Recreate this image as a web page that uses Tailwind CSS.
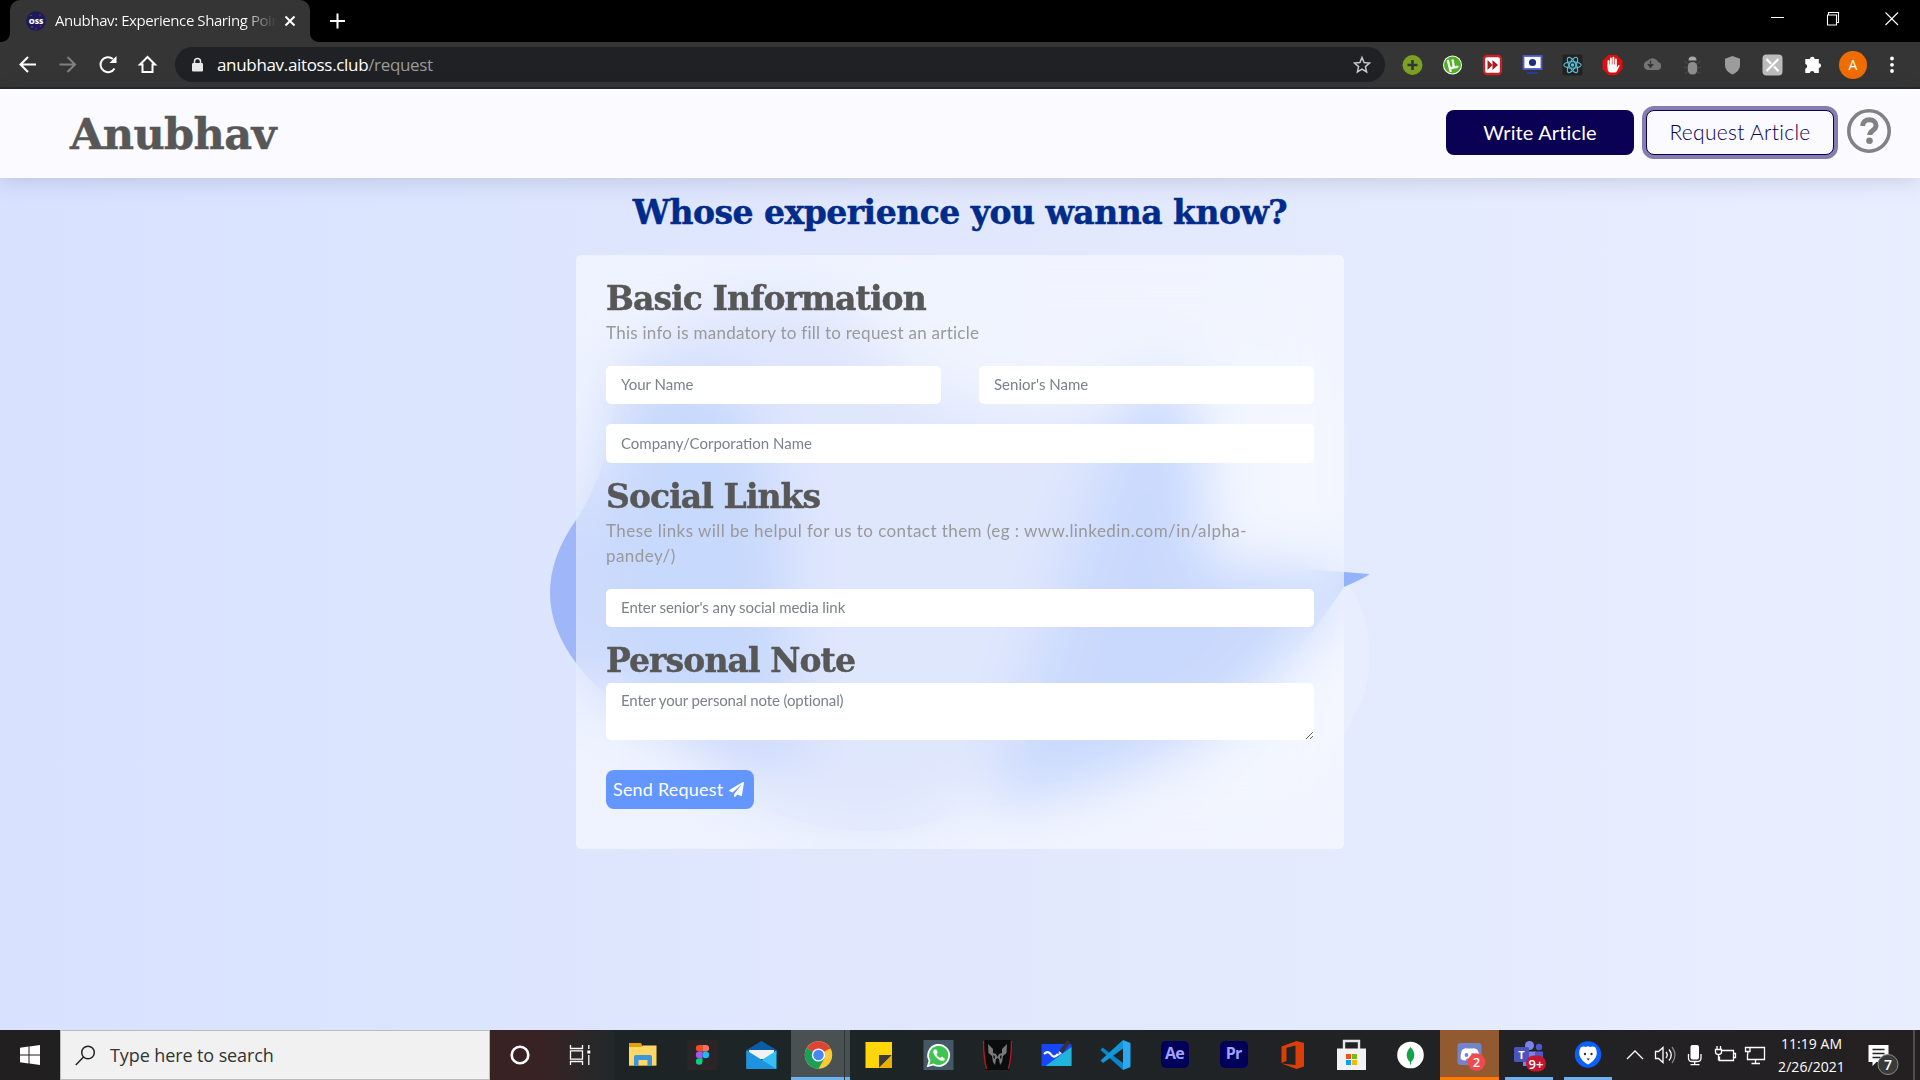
<!DOCTYPE html>
<html lang="en">
<head>
<meta charset="utf-8">
<title>Anubhav: Experience Sharing Point</title>
<script src="https://cdn.jsdelivr.net/npm/@tailwindcss/browser@4"></script>
</head>
<body class="flex h-[1080px] w-[1920px] flex-col overflow-hidden bg-black font-['Open_Sans',sans-serif]">

<!-- Tab strip -->
<div class="flex h-[42px] shrink-0 items-stretch justify-between bg-black">
  <div class="flex">
    <svg class="h-[42px] w-[10px]" viewBox="0 0 10 42"><path d="M10 33v9H1c5 0 9-4 9-9z" fill="#353535"/></svg>
    <div class="flex w-[300px] items-center rounded-t-[10px] bg-[#353535] pl-4">
      <svg class="size-5 shrink-0" viewBox="0 0 20 20"><circle cx="10" cy="10" r="9.8" fill="#1b1b5c"/><g fill="#a02a78"><circle cx="5" cy="4.500" r=".8"/><circle cx="14" cy="4" r=".8"/><circle cx="6" cy="16" r=".9"/><circle cx="14.500" cy="15" r=".8"/><circle cx="10" cy="17.500" r=".7"/></g><text x="10" y="12.800" text-anchor="middle" font-family="Open Sans" font-weight="800" font-size="7.500" fill="#fff">OSS</text></svg>
      <span class="ml-[9px] w-[222px] overflow-hidden pb-px whitespace-nowrap bg-linear-to-r from-white from-85% to-[#353535] bg-clip-text text-[15px] tracking-[-0.42px] text-transparent">Anubhav: Experience Sharing Poin</span>
      <svg class="ml-1.5 h-[14px] w-[14px]" viewBox="0 0 14 14"><path d="M2.500 2.500l9 9m0-9l-9 9" stroke="#fff" stroke-width="2"/></svg>
    </div>
    <svg class="h-[42px] w-[10px]" viewBox="0 0 10 42"><path d="M0 33v9h9c-5 0-9-4-9-9z" fill="#353535"/></svg>
    <svg class="ml-[9px] h-[42px] w-4" viewBox="0 0 16 42"><path d="M8.500 13.500v15M1 21h15" stroke="#fff" stroke-width="2"/></svg>
  </div>
  <svg class="h-[42px] w-[175px]" viewBox="0 0 175 42" fill="none" stroke="#fff" stroke-width="1.100"><path d="M26 17.500h13M83.500 15.500v-3h10v10h-2.500M82.500 15h9v10h-9zM140.500 12.500l12.500 12.500m0-12.500l-12.500 12.500"/></svg>
</div>

<!-- Toolbar -->
<div class="flex h-[47px] shrink-0 items-center border-b-2 border-[#262626] bg-[#353535]">
  <svg class="h-[45px] w-[175px]" viewBox="0 0 175 45" fill="none" stroke="#fff" stroke-width="2">
    <path d="M36 22.500H20.500m7.500-7.500l-7.500 7.500 7.500 7.500"/>
    <path d="M59.500 22.500H75m-7.500-7.500l7.500 7.500-7.500 7.500" stroke="#808080"/>
    <path d="M114.500 26.500a7.500 7.500 0 1 1-1.600-9.500"/><path d="M116.500 14v7h-7z" fill="#fff" stroke="none"/>
    <path d="M142.500 30v-7.500h-2.500l7.500-7.500 7.500 7.500h-2.500v7.500z"/>
  </svg>
  <div class="flex h-[35px] w-[1210px] items-center justify-between rounded-full bg-[#202124] pl-[16px] pr-3">
    <div class="flex items-center">
      <svg class="h-[16px] w-[13px]" viewBox="0 0 13 16"><rect x="1" y="6" width="11" height="8.500" rx="1.200" fill="#e8e8e8"/><path d="M3.500 6V4.500a3 3 0 0 1 6 0V6" fill="none" stroke="#e8e8e8" stroke-width="1.500"/></svg>
      <p class="ml-[13px] text-[17px] leading-[24px] tracking-[-0.33px] text-white">anubhav.aitoss.club<span class="text-[#9a9a9a]">/request</span></p>
    </div>
    <svg class="size-[20px]" viewBox="0 0 20 20"><path d="M9 2.500l2.100 5 5.400.5-4.100 3.600 1.200 5.300L9 14.100l-4.600 2.800 1.200-5.300L1.500 8l5.400-.5z" fill="none" stroke="#c8c8c8" stroke-width="1.500"/></svg>
  </div>
  <div class="flex flex-1 items-center pl-[17px]">
    <svg class="h-[24px] w-[40px]" viewBox="0 0 40 24"><circle cx="10.500" cy="12" r="10" fill="#7ba023"/><path d="M10.500 7v10M5.500 12h10" stroke="#353535" stroke-width="2.600"/></svg>
    <svg class="h-[24px] w-[40px]" viewBox="0 0 40 24"><circle cx="10.500" cy="12" r="9.500" fill="#fff"/><circle cx="10.500" cy="12" r="8.500" fill="#4fb021"/><path d="M5.800 7l1.600 6.500c.6 2.400 4.600 2 4.200-.8L10.500 6.500m1.100 6.500c.7 1.800 3.200 1.600 4.400 0M7.400 13.500l1.300 5.500" fill="none" stroke="#fff" stroke-width="2.300"/></svg>
    <svg class="h-[24px] w-[40px]" viewBox="0 0 40 24"><rect x="2" y="3" width="17" height="18" rx="3" fill="#fff" stroke="#cb2026" stroke-width="2.300"/><path d="M5.500 7l5 5-5 5zM10.500 7l5.500 5-5.500 5z" fill="#a81c20"/></svg>
    <svg class="h-[24px] w-[40px]" viewBox="0 0 40 24"><rect x="1.500" y="3" width="18" height="13" fill="#fff" stroke="#4c5bd4" stroke-width="1.800"/><circle cx="10.500" cy="9.500" r="3.600" fill="#1e2f80"/><path d="M5 19h11v2H5z" fill="#2b3aa0"/></svg>
    <svg class="h-[24px] w-[40px]" viewBox="0 0 40 24"><rect x=".500" y="1.500" width="20" height="21" rx="2" fill="#222"/><g fill="none" stroke="#53c1de" stroke-width="1.100"><ellipse cx="10.500" cy="12" rx="8.700" ry="3.300"/><ellipse cx="10.500" cy="12" rx="8.700" ry="3.300" transform="rotate(60 10.500 12)"/><ellipse cx="10.500" cy="12" rx="8.700" ry="3.300" transform="rotate(120 10.500 12)"/></g><circle cx="10.500" cy="12" r="1.800" fill="#53c1de"/></svg>
    <svg class="h-[24px] w-[40px]" viewBox="0 0 40 24"><path d="M6.500 2h8l6 6v8l-6 6h-8l-6-6V8z" fill="#e40d0d"/><path d="M6.500 13.500V8M8.900 12V5.500M11.400 12V4.700M13.900 12V6.500" stroke="#fff" stroke-width="1.900" stroke-linecap="round"/><path d="M5.600 11.500h9.200v3l1.800-2.600 1.200.6-2.800 5.500c-.6 1-1.500 1.500-3 1.500H9c-2 0-3.400-1.500-3.400-4z" fill="#fff"/></svg>
    <svg class="h-[24px] w-[40px]" viewBox="0 0 40 24"><path d="M5 17.500a4.700 4.700 0 0 1-.3-9.200 6 6 0 0 1 10.500 1.200 4.200 4.200 0 0 1 .5 8z" transform="translate(.8 -.5)" fill="#747474"/><path d="M8.500 7.500v5.500M6.300 11.500l2.200 3 2.200-3z" fill="#353535" stroke="#353535" stroke-width="1.200"/></svg>
    <svg class="h-[24px] w-[40px]" viewBox="0 0 40 24"><path d="M6.500 7.500a4 4 0 0 1 8 0z" fill="#a9a9a9"/><rect x="5.800" y="9" width="9.400" height="12.500" rx="4.500" fill="#8d8d8d"/><path d="M2.500 8l3 2.500M18.500 8l-3 2.500M2 14.500h3.500M15.500 14.500H19M3 20.500l3-2M18 20.500l-3-2" stroke="#4a4a4a" stroke-width="1.200"/></svg>
    <svg class="h-[24px] w-[40px]" viewBox="0 0 40 24"><path d="M10.500 3l7.500 2.800v6c0 4.500-3 8-7.500 9.700C6 19.800 3 16.300 3 11.800v-6z" fill="#9c9c9c"/></svg>
    <svg class="h-[24px] w-[40px]" viewBox="0 0 40 24"><rect x=".500" y="1.500" width="20" height="21" rx="4" fill="#bcbcbc"/><path d="M4.500 6l4.500 4.700M12 13.500l4.500 4.700M16.500 6l-12 12" stroke="#fff" stroke-width="2.200"/></svg>
    <svg class="h-[24px] w-[37px]" viewBox="0 0 37 24"><path d="M3 6.500h4.200a2.300 2.300 0 1 1 4.600 0H16v4.300a2.300 2.300 0 1 1 0 4.600V20.500h-4.300a2.400 2.400 0 0 0-4.700 0H2.500v-4.300a2.400 2.400 0 0 0 0-4.700V6.500z" transform="translate(.8 -.5)" fill="#fff"/></svg>
    <div class="flex size-7 items-center justify-center rounded-full bg-[#ef6c00] text-[14px] text-white">A</div>
    <svg class="ml-[21px] h-[24px] w-[8px]" viewBox="0 0 8 24" fill="#fff"><circle cx="4" cy="5.500" r="1.900"/><circle cx="4" cy="11.800" r="1.900"/><circle cx="4" cy="18" r="1.900"/></svg>
  </div>
</div>

<!-- Site header -->
<header class="relative z-10 flex h-[89px] shrink-0 items-center justify-between bg-[#fbfaff] pb-0.5 pl-[70px] pr-[29px] shadow-[0_4px_20px_rgba(50,60,90,0.17)]">
  <h1 class="pt-0.5 font-['DejaVu_Serif',serif] text-[43px] leading-[60px] font-bold tracking-[-0.6px] text-[#575757] [-webkit-text-stroke:0.5px_#575757]">Anubhav</h1>
  <div class="flex items-center font-['Lato',sans-serif]">
    <button class="h-[45px] w-[188px] rounded-lg bg-[#0a0054] pb-px text-[20px] tracking-[0.15px] text-white">Write Article</button>
    <button class="ml-3 h-[45px] w-[188px] rounded-lg border border-[#0a0054] bg-[#fbfaff] pb-px text-[21px] font-light tracking-[0.3px] text-[#0a0054] ring-4 ring-[#857dae]">Request Article</button>
    <svg class="mt-[-3px] ml-[13px] size-[44px]" viewBox="0 0 44 44"><circle cx="22" cy="22" r="20.200" fill="none" stroke="#828282" stroke-width="3.600"/><path d="M15.500 17c.3-4 3-6.200 6.700-6.200 4 0 6.800 2.300 6.800 5.700 0 5-6.300 5-6.300 9.500" fill="none" stroke="#828282" stroke-width="5"/><circle cx="22.500" cy="31.800" r="3.300" fill="#828282"/></svg>
  </div>
</header>

<!-- Page -->
<main class="relative flex h-[852px] shrink-0 flex-col items-center bg-linear-to-r from-[#d8e2ff] via-[#e1e8fd] to-[#e9eeff]">
  <svg class="absolute inset-0 h-[852px] w-[1920px]" viewBox="0 178 1920 852">
    <circle cx="1230" cy="460" r="120" fill="#e6edfe"/>
    <circle cx="1240" cy="655" r="130" fill="#e8eefe"/>
    <path d="M650 350Q730 260 850 310Q900 390 1000 415Q1080 420 1120 400L1080 700Q1000 770 940 820Q850 850 740 800Q640 750 620 500Z" fill="#bfcefb"/>
    <path d="M616 372Q690 350 740 385Q785 480 790 560Q785 650 810 755Q740 775 680 730Q610 710 576 663Q524 594 576 520Q616 460 616 372Z" fill="#9fb6f9"/>
    <path d="M630 385Q690 370 730 400Q775 480 780 560Q775 650 790 735Q730 755 690 720Q620 690 610 650V520Q630 460 630 385Z" fill="#8eb2f8"/>
    <path d="M1140 385Q1170 360 1188 390Q1205 470 1208 565Q1290 568 1344 572L1369 574Q1369 576 1344 587Q1310 640 1250 700Q1160 780 990 808Q1020 700 1060 590Q1100 460 1140 385Z" fill="#93b3fb"/>
  </svg>
  <h2 class="relative h-[77px] font-['DejaVu_Serif',serif] text-[33px] leading-[69px] font-bold tracking-[-0.5px] text-[#002b8a] [-webkit-text-stroke:0.5px_#002b8a]">Whose experience you wanna know?</h2>
  <form class="relative flex w-[768px] flex-col rounded-[5px] bg-white/50 px-[30px] pt-[30px] pb-10 font-['Lato',sans-serif] text-[15px] backdrop-blur-[28px]">
    <h3 class="font-['DejaVu_Serif',serif] text-[33px] leading-[27px] font-bold tracking-[-0.9px] text-[#575757] [-webkit-text-stroke:0.5px_#575757]">Basic Information</h3>
    <p class="mt-2 text-[17px] leading-[25px] tracking-[0.26px] text-[#999]">This info is mandatory to fill to request an article</p>
    <div class="mt-[21px] grid grid-cols-2 gap-x-[38px] gap-y-5">
      <input class="h-[38px] rounded-[5px] bg-white px-[15px] pb-0.5 placeholder:text-[#7b828a]" placeholder="Your Name">
      <input class="h-[38px] rounded-[5px] bg-white px-[15px] pb-0.5 placeholder:text-[#7b828a]" placeholder="Senior's Name">
      <input class="col-span-2 h-[39px] rounded-[5px] bg-white px-[15px] pb-0.5 placeholder:text-[#7b828a]" placeholder="Company/Corporation Name">
    </div>
    <h3 class="mt-5 font-['DejaVu_Serif',serif] text-[33px] leading-[27px] font-bold tracking-[-0.9px] text-[#575757] [-webkit-text-stroke:0.5px_#575757]">Social Links</h3>
    <p class="mt-2 text-[17px] leading-[25px] tracking-[0.44px] text-[#999]">These links will be helpul for us to contact them (eg : www.linkedin.com/in/alpha-<br>pandey/)</p>
    <input class="mt-[21px] h-[38px] rounded-[5px] bg-white px-[15px] pb-0.5 tracking-[-0.07px] placeholder:text-[#7b828a]" placeholder="Enter senior's any social media link">
    <h3 class="mt-5 font-['DejaVu_Serif',serif] text-[33px] leading-[27px] font-bold tracking-[-0.9px] text-[#575757] [-webkit-text-stroke:0.5px_#575757]">Personal Note</h3>
    <textarea class="mt-[9px] h-[57px] resize rounded-[5px] bg-white px-[15px] pt-1.5 leading-[22px] tracking-[-0.13px] placeholder:text-[#7b828a]" placeholder="Enter your personal note (optional)"></textarea>
    <button type="button" class="mt-[30px] flex h-[39px] w-[148px] items-center rounded-lg bg-[#6496ff] pb-px pl-[7px] text-[18px] tracking-[0.2px] text-white">Send Request
      <svg class="ml-[6px] size-[15px]" viewBox="0 0 512 512" fill="#fff"><path d="M476 3L12 271c-18 10-16 36 2 43l107 45L409 105c5-5 13 2 8 8L176 407v80c0 24 28 33 42 16l64-78 125 53c14 6 31-3 33-19l72-432c3-20-18-35-36-24z"/></svg>
    </button>
  </form>
</main>

<!-- Taskbar -->
<footer class="flex h-[50px] shrink-0 bg-linear-to-r from-[#211f20] from-0% via-[#1d2527] via-40% to-[#242022]">
  <svg class="h-[50px] w-[60px]" viewBox="0 0 60 50" fill="#fff"><path d="M20 17.800l8.500-1.200v7.900H20zM29.500 16.500L40 15v9.500H29.500zM20 25.500h8.500v7.900L20 32.200zM29.500 25.500H40V35l-10.500-1.500z"/></svg>
  <div class="flex w-[430px] items-center border border-[#bbb] bg-[#f1f1f1] pl-3.5">
    <svg class="size-[21px]" viewBox="0 0 21 21" fill="none" stroke="#222" stroke-width="1.500"><circle cx="13" cy="7.500" r="6.300"/><path d="M8.500 12L.800 20"/></svg>
    <span class="ml-[14px] text-[18px] leading-[26px] tracking-[-0.1px] text-[#333]">Type here to search</span>
  </div>
  <div class="flex w-[124px] bg-linear-to-r from-[#392224] from-40% to-[#20282a]">
    <svg class="h-[50px] w-[60px]" viewBox="0 0 60 50"><circle cx="30" cy="25" r="8.300" fill="none" stroke="#fff" stroke-width="2.600"/></svg>
    <svg class="h-[50px] w-[60px]" viewBox="0 0 60 50" fill="none" stroke="#fff" stroke-width="1.300"><path d="M20.500 15v3.500h12V15M20.500 20.800h12v8.400h-12zM20.500 35v-3.500h12V35M38.800 15v4M38.800 25v10"/><path d="M37.300 20.500h3v3h-3z" fill="#fff" stroke="none"/></svg>
  </div>
  <div class="flex">
    <!-- File Explorer -->
    <svg class="h-[50px] w-[59px]" viewBox="0 0 59 50"><path d="M15 13h12l1.500 3H42v19.500H15z" fill="#e3a008"/><path d="M15 17h12.500l1.500-1.500h13.500V35.500H15z" fill="#ffd765"/><path d="M20 36V27q0-2 2-2h14q2 0 2 2v9h-4.500v-6h-9v6z" fill="#3d96dc"/></svg>
    <!-- Figma -->
    <svg class="h-[50px] w-[59px]" viewBox="0 0 59 50"><rect x="14.500" y="10" width="30" height="30" fill="#2a2627"/><path d="M29.500 15h-3.300a3.300 3.300 0 0 0 0 6.600h3.300z" fill="#f24e1e"/><path d="M29.500 15h3.300a3.300 3.300 0 0 1 0 6.600h-3.300z" fill="#ff7262"/><path d="M29.500 21.600h-3.300a3.300 3.300 0 0 0 0 6.600h3.300z" fill="#a259ff"/><circle cx="32.800" cy="24.900" r="3.300" fill="#1abcfe"/><path d="M29.500 28.200h-3.300a3.300 3.300 0 1 0 3.300 3.300z" fill="#0acf83"/></svg>
    <!-- Mail -->
    <svg class="h-[50px] w-[59px]" viewBox="0 0 59 50"><path d="M14.500 20L29.500 11l15 9v5h-30z" fill="#0a5ca8"/><path d="M17 20h25v9H17z" fill="#f2f2f2"/><path d="M14.500 20.500l15 9.500 15-9.500V39h-30z" fill="#35c0f5"/><path d="M14.500 20.500L44.500 39h-30z" fill="#1e94e0"/></svg>
    <!-- Chrome -->
    <div class="flex w-[59px] border-b-[3px] border-[#6cb1f0] bg-[#4a5153]">
      <svg class="h-[50px] w-[54px] border-r border-[#2f3638]" viewBox="0 0 54 50"><circle cx="28" cy="25" r="14" fill="#fbc934"/><path d="M28 25L15.900 18A14 14 0 0 1 40.100 18z" fill="#db4437"/><path d="M15.900 18A14 14 0 0 0 28 39l6.200-10.800L28 25z" fill="#1a9f5a"/><path d="M28 18h12.100" stroke="#db4437"/><circle cx="28" cy="25" r="6.700" fill="#fff"/><circle cx="28" cy="25" r="5.400" fill="#4587f3"/></svg>
    </div>
    <!-- Sticky Notes -->
    <svg class="h-[50px] w-[59px]" viewBox="0 0 59 50"><path d="M15.500 12H42v26H15.500z" fill="#ffd60a"/><path d="M29 38V25h13z" fill="#3b3b3b"/><path d="M29 38l13-13v13z" fill="#e8b100"/></svg>
    <!-- WhatsApp -->
    <svg class="h-[50px] w-[59px]" viewBox="0 0 59 50"><rect x="14.500" y="10" width="30" height="30" fill="#445965"/><path d="M19 36l1.500-5.500a10.500 10.500 0 1 1 4 4z" fill="#3fc351" stroke="#fff" stroke-width="1.800"/><path d="M25.500 19.500c-3 2 0 6.500 3 9s6.500 3.500 7.500.5l-3-2.500-1.700 1.500c-2-.7-3-2-3.800-3.700l1.300-1.800-1.500-3z" fill="#fff"/></svg>
    <!-- PredatorSense -->
    <svg class="h-[50px] w-[59px]" viewBox="0 0 59 50"><path d="M17 10h25l2.500 4-3 26h-24l-3-26z" fill="#0c0c0c"/><path d="M15.500 11c0 10 1 20 3 28M43.500 11c0 10-1 20-3 28" fill="none" stroke="#b01c22" stroke-width="1.400"/><path d="M20 14l5 5v4l3 1 1.500 3 1.500-3 3-1v-4l5-5-.5 9-3.500 3-1 6-2 3-1-6-1.500-1-1.500 1-1 6-2-3-1-6-3.500-3z" fill="#77797c"/><path d="M25.500 25l1.500 1-.3 3-1.200-1zM33.500 25l-1.500 1 .3 3 1.200-1z" fill="#111"/></svg>
    <!-- Whiteboard -->
    <svg class="h-[50px] w-[59px]" viewBox="0 0 59 50"><path d="M14.500 14h30v22h-30z" fill="#1746f5"/><path d="M44.500 17v19h-26z" fill="#20b4dd"/><path d="M17 24q4-4 7 .5t7-.5" fill="none" stroke="#fff" stroke-width="2.200"/><path d="M42 11l-8 11" stroke="#333" stroke-width="4"/><path d="M31 26l1-5 3 2.500z" fill="#ddd"/></svg>
    <!-- VS Code -->
    <svg class="h-[50px] w-[59px]" viewBox="0 0 59 50"><path d="M37 10L44.500 13v24L37 40z" fill="#2aa9f1"/><path d="M16.500 17.500L37 33v7L14.500 20z" fill="#0b84cc"/><path d="M37 10v8.500L17 33l-2.500-2.500z" fill="#1296da"/></svg>
    <!-- After Effects -->
    <div class="flex w-[59px] items-center justify-center pb-0.5"><span class="flex h-[27px] w-[28px] items-center justify-center rounded-[5px] bg-[#00005b] pb-0.5 text-[16px] font-bold tracking-tighter text-[#a3a0ff]">Ae</span></div>
    <!-- Premiere Pro -->
    <div class="flex w-[59px] items-center justify-center pb-0.5"><span class="flex h-[27px] w-[28px] items-center justify-center rounded-[5px] bg-[#00005b] pb-0.5 text-[16px] font-bold tracking-tighter text-[#a3a0ff]">Pr</span></div>
    <!-- Office -->
    <svg class="h-[50px] w-[59px]" viewBox="0 0 59 50"><path d="M18.500 16.500L33.500 11l7.500 2v23.500l-7.500 2.500-15-5.500 14 1.500V15.500l-9 2.300V31l-5 2z" fill="#dc3e08"/></svg>
    <!-- Store -->
    <svg class="h-[50px] w-[59px]" viewBox="0 0 59 50"><path d="M22 20v-9h15v9" fill="none" stroke="#e6e6e6" stroke-width="2.400"/><path d="M15 18.500h29V40H15z" fill="#f2f2f2"/><path d="M24 24h5v5h-5z" fill="#f25022"/><path d="M30 24h5v5h-5z" fill="#7fba00"/><path d="M24 30h5v5h-5z" fill="#00a4ef"/><path d="M30 30h5v5h-5z" fill="#ffb900"/></svg>
    <!-- MongoDB Compass -->
    <svg class="h-[50px] w-[59px]" viewBox="0 0 59 50"><circle cx="29.500" cy="25" r="13.300" fill="#fff"/><path d="M29.500 17c5 5 5 11 .5 15h-1c-4.500-4-4.500-10 .5-15z" fill="#13a24a"/><path d="M29.500 31v3.500" stroke="#13a24a"/></svg>
    <!-- Discord -->
    <div class="w-[59px] border-b-[3px] border-[#ff7900] bg-[#925a31]"><svg class="h-[50px] w-[59px]" viewBox="0 0 59 50"><rect x="17.500" y="13" width="24" height="22" rx="3" fill="#7484cc"/><path d="M22 20q3-2.500 5-1.500h5q3-1 5.500 1.500 2.500 4 2 8.500-3 2.500-5 2l-1.500-2h-6l-1.500 2q-3 .5-5-2 0-5 1.500-8.500z" fill="#fff"/><circle cx="26.500" cy="25" r="1.900" fill="#7484cc"/><circle cx="33" cy="25" r="1.900" fill="#7484cc"/><circle cx="36.500" cy="32" r="8.800" fill="#f0494f"/><text x="36.500" y="36.500" text-anchor="middle" font-family="Open Sans" font-weight="600" font-size="13" fill="#fff">2</text></svg></div>
    <!-- Teams -->
    <div class="flex w-[59px] justify-center"><div class="w-[48px] border-b-[3px] border-[#6cb1f0]"><svg class="h-[50px] w-[48px]" viewBox="0 0 48 50"><circle cx="24.500" cy="15.500" r="4.500" fill="#7b83eb"/><circle cx="34" cy="17" r="3.200" fill="#5059c9"/><path d="M18 21.500h13V36H18z" fill="#7b83eb"/><path d="M30 21.500h8V32h-8z" fill="#5059c9"/><rect x="9" y="17" width="15" height="15" rx="1.500" fill="#4b53bc"/><text x="16.500" y="28.500" text-anchor="middle" font-family="Open Sans" font-weight="700" font-size="11" fill="#fff">T</text><rect x="21" y="25.500" width="20" height="16" rx="8" fill="#c4162f"/><text x="31" y="38.500" text-anchor="middle" font-family="Open Sans" font-weight="600" font-size="13" fill="#fff">9+</text></svg></div></div>
    <!-- Bear-shaped VPN client -->
    <div class="flex w-[59px] justify-center"><div class="w-[48px] border-b-[3px] border-[#6cb1f0]"><svg class="h-[50px] w-[48px]" viewBox="0 0 48 50"><circle cx="24" cy="24.500" r="13.200" fill="#0a60ff"/><path d="M17 17q3-1 5 0 2-1.500 4 0 3-1 5 0 2.500 4 1.500 8.500-2 5.500-8.500 9-6.500-3.500-8.500-9-1-4.500 1.500-8.500z" fill="#fff"/><circle cx="21" cy="24" r="1.200" fill="#333"/><circle cx="27.500" cy="24" r="1.200" fill="#333"/><path d="M22.500 28.500h3.500l-1.700 2z" fill="#333"/></svg></div></div>
  </div>
  <div class="flex flex-1">
    <svg class="h-[50px] w-[156px]" viewBox="1617 1030 156 50" fill="none" stroke="#fff" stroke-width="1.300">
      <path d="M1627 1059l8-8 8 8"/>
      <path d="M1655.500 1051.500h3l4.500-4v15l-4.500-4h-3zM1666 1052q2.500 3 0 6M1669 1049.500q4.500 5.500 0 11"/><path d="M1672 1047q6 8 0 16" stroke="#888"/>
      <rect x="1690.500" y="1045" width="8.500" height="14.500" rx="2" fill="#fff" stroke="none"/><path d="M1688.500 1054v4q0 3.500 3.500 3.500h5.500q3.500 0 3.500-3.500v-4M1694.700 1061.500v3M1690.500 1064.700h9"/>
      <path d="M1722 1050.500h11.500v10h-14v-4M1734 1053.500h1.500v4h-1.500M1715.500 1049.500h6v2.500q0 2.500-3 2.500t-3-2.500zM1717 1049v-3M1720.500 1049v-3M1718.500 1054.500v6"/>
      <path d="M1750.500 1047.500h14v12h-17v-5.500M1755.500 1060v3M1751.500 1063.500h8.500M1745.500 1047.500h4.500v4h-4.500zM1747.800 1051.500v3"/>
    </svg>
    <div class="w-[77px] pt-0.5 text-center text-[14px] leading-[23px] tracking-[0.05px] text-white"><p>11:19 AM</p><p>2/26/2021</p></div>
    <svg class="h-[50px] flex-1" viewBox="1851 1030 69 50"><path d="M1869 1045h20v17h-12l-4 4v-4h-4z" fill="#fff"/><path d="M1873 1049.500h12M1873 1053.500h12M1873 1057.500h8" stroke="#222" stroke-width="1.300"/><circle cx="1888.500" cy="1064.500" r="10" fill="#3a3a3b" stroke="#8a8a8a"/><text x="1888.500" y="1069.500" text-anchor="middle" font-family="Open Sans" font-weight="600" font-size="14" fill="#fff">7</text><path d="M1914.500 1030v50" stroke="#7a7a7a"/></svg>
  </div>
</footer>
</body>
</html>
